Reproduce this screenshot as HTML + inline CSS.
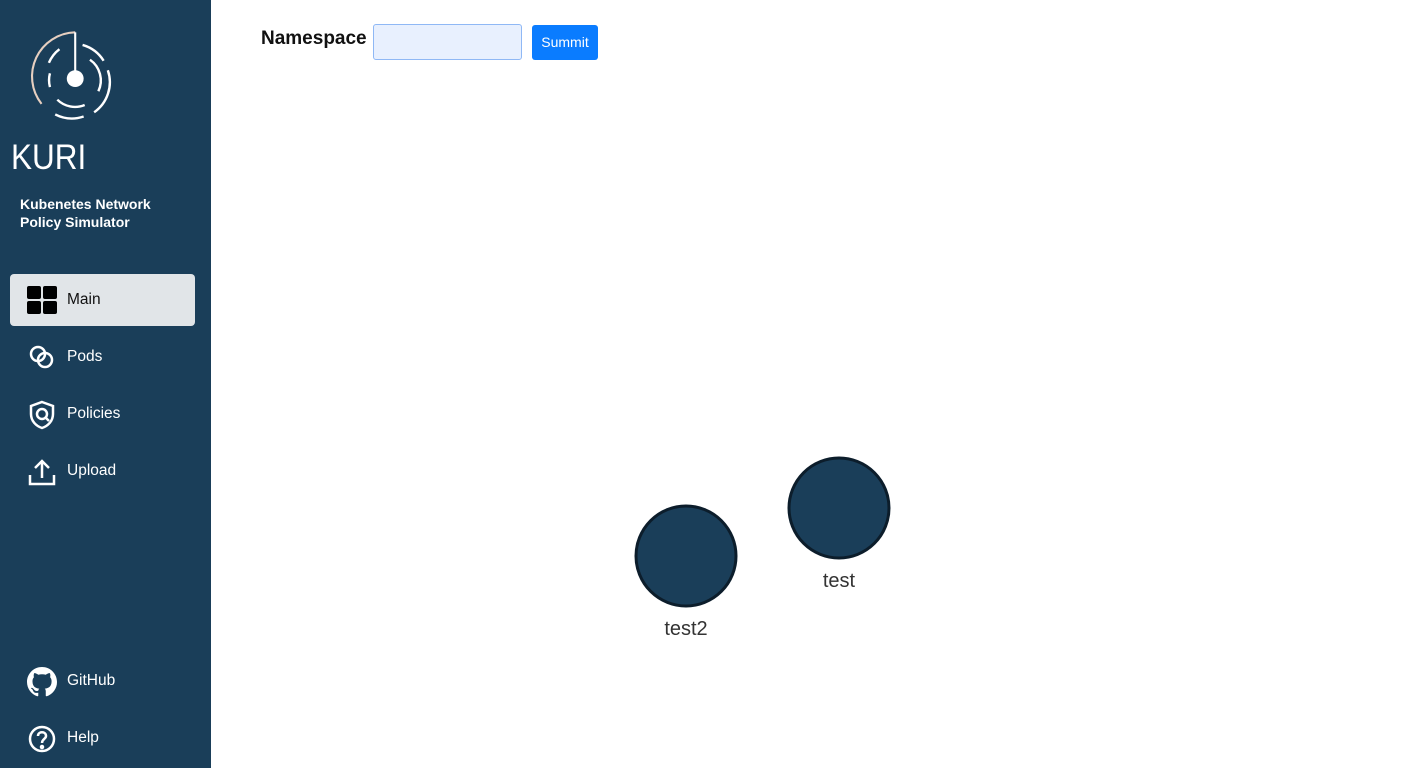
<!DOCTYPE html>
<html><head><style>
body{margin:0;width:1412px;height:768px;overflow:hidden;font-family:"Liberation Sans","Noto Sans CJK KR",sans-serif;background:#fff;position:relative}
.sb{position:absolute;left:0;top:0;width:211px;height:768px;background:#1a3e59;color:#fff}
.kuri{position:absolute;left:11px;top:138px;font-size:35px;font-weight:normal;transform:scaleX(0.9);transform-origin:left}
.sub{position:absolute;left:20px;top:195px;font-size:14px;font-weight:bold;line-height:18px}
.nav{position:absolute;left:10px;width:185px;height:52px;border-radius:4px;font-size:15.5px}
.nav span{position:absolute;left:57px;top:17px}
.nav svg{position:absolute;left:17px;top:12px}
.act{background:#e1e5e8;color:#111}
.lbl{position:absolute;font-weight:bold;color:#111}
</style></head><body>
<div class="sb">
<svg style="position:absolute;left:16px;top:26px" width="110" height="100" viewBox="0 0 100 95">
<path d="M54 6 A42 42 0 0 0 22 74" fill="none" stroke="#e6cfc0" stroke-width="2"/>
<line x1="54" y1="6" x2="54" y2="45" stroke="#fff" stroke-width="2"/>
<circle cx="54" cy="50" r="8" fill="#fff"/>
<g fill="none" stroke="#fff" stroke-width="2.3">
<path d="M61 18 A35 35 0 0 1 81 33"/>
<path d="M85 42 A35 35 0 0 1 72 82"/>
<path d="M62 86 A35 35 0 0 1 35 84"/>
<path d="M39 22 A32 32 0 0 0 29 35"/>
<path d="M30 45 A25 25 0 0 0 30 58"/>
<path d="M37 70 A24 24 0 0 0 63 75"/>
<path d="M68 32 A24 24 0 0 1 76 62"/>
</g></svg>
<div class="kuri">KURI</div>
<div class="sub">Kubenetes Network<br>Policy Simulator</div>
<div class="nav act" style="top:274px"><svg width="30" height="28"><rect x="0" y="0" width="14" height="13" rx="2"/><rect x="16" y="0" width="14" height="13" rx="2"/><rect x="0" y="15" width="14" height="13" rx="2"/><rect x="16" y="15" width="14" height="13" rx="2"/></svg><span>Main</span></div>
<div class="nav" style="top:331px"><svg width="30" height="30" fill="none" stroke="#fff" stroke-width="2.5"><circle cx="11" cy="11" r="7"/><circle cx="18" cy="17" r="7"/></svg><span>Pods</span></div>
<div class="nav" style="top:388px"><svg width="30" height="30" fill="none" stroke="#fff" stroke-width="2.5"><path d="M15 2 L26 6 V14 C26 21 21 26 15 28 C9 26 4 21 4 14 V6 Z"/><circle cx="15" cy="14" r="5"/><path d="M19 18 L22 21"/></svg><span>Policies</span></div>
<div class="nav" style="top:445px"><svg width="30" height="30" fill="none" stroke="#fff" stroke-width="2.5"><path d="M3 18 V27 H27 V18"/><path d="M15 21 V4 M8 11 L15 4 L22 11"/></svg><span>Upload</span></div>
<div class="nav" style="top:655px"><svg width="30" height="30" viewBox="0 0 16 16"><path fill="#fff" d="M8 0C3.58 0 0 3.58 0 8c0 3.540 2.29 6.53 5.47 7.590.4.07.55-.17.55-.38 0-.19-.01-.82-.01-1.490-2.010.37-2.530-.49-2.690-.94-.09-.23-.48-.94-.82-1.130-.28-.15-.68-.52-.01-.53.63-.01 1.080.58 1.230.82.72 1.210 1.870.87 2.330.66.07-.52.28-.87.51-1.070-1.780-.2-3.640-.89-3.640-3.950 0-.87.31-1.590.82-2.150-.08-.2-.36-1.020.08-2.120 0 0 .67-.21 2.200.82.64-.18 1.320-.27 2-.27.68 0 1.360.09 2 .27 1.530-1.040 2.200-.82 2.200-.82.44 1.100.16 1.920.08 2.120.51.56.82 1.270.82 2.150 0 3.070-1.870 3.750-3.650 3.950.29.25.54.73.54 1.480 0 1.070-.01 1.930-.01 2.200 0 .21.15.46.55.38A8.013 8.013 0 0016 8c0-4.420-3.580-8-8-8z"/></svg><span>GitHub</span></div>
<div class="nav" style="top:712px"><svg width="30" height="30" fill="none" stroke="#fff" stroke-width="2.5"><circle cx="15" cy="15" r="12"/><path d="M11 12 C11 7 19 7 19 12 C19 15 15 15 15 19"/><circle cx="15" cy="23" r="1" fill="#fff"/></svg><span>Help</span></div>
</div>
<div class="lbl" style="left:261px;top:28px;font-size:19px">Namespace</div>
<div style="position:absolute;left:373px;top:24px;width:147px;height:34px;border:1px solid #8fb8f5;border-radius:3px;background:#e8f0fe"></div>
<div style="position:absolute;left:532px;top:25px;width:66px;height:35px;background:#0a7cff;border-radius:3px;color:#fff;font-size:14px;text-align:center;line-height:35px">Summit</div>
<svg style="position:absolute;left:0;top:0" width="1412" height="768">
<circle cx="686" cy="556" r="50" fill="#1a3e59" stroke="#0c1d2b" stroke-width="3"/>
<circle cx="839" cy="508" r="50" fill="#1a3e59" stroke="#0c1d2b" stroke-width="3"/>
<text x="686" y="635" text-anchor="middle" font-family="Liberation Sans" font-size="20" fill="#333">test2</text>
<text x="839" y="587" text-anchor="middle" font-family="Liberation Sans" font-size="20" fill="#333">test</text>
</svg>
</body></html>
